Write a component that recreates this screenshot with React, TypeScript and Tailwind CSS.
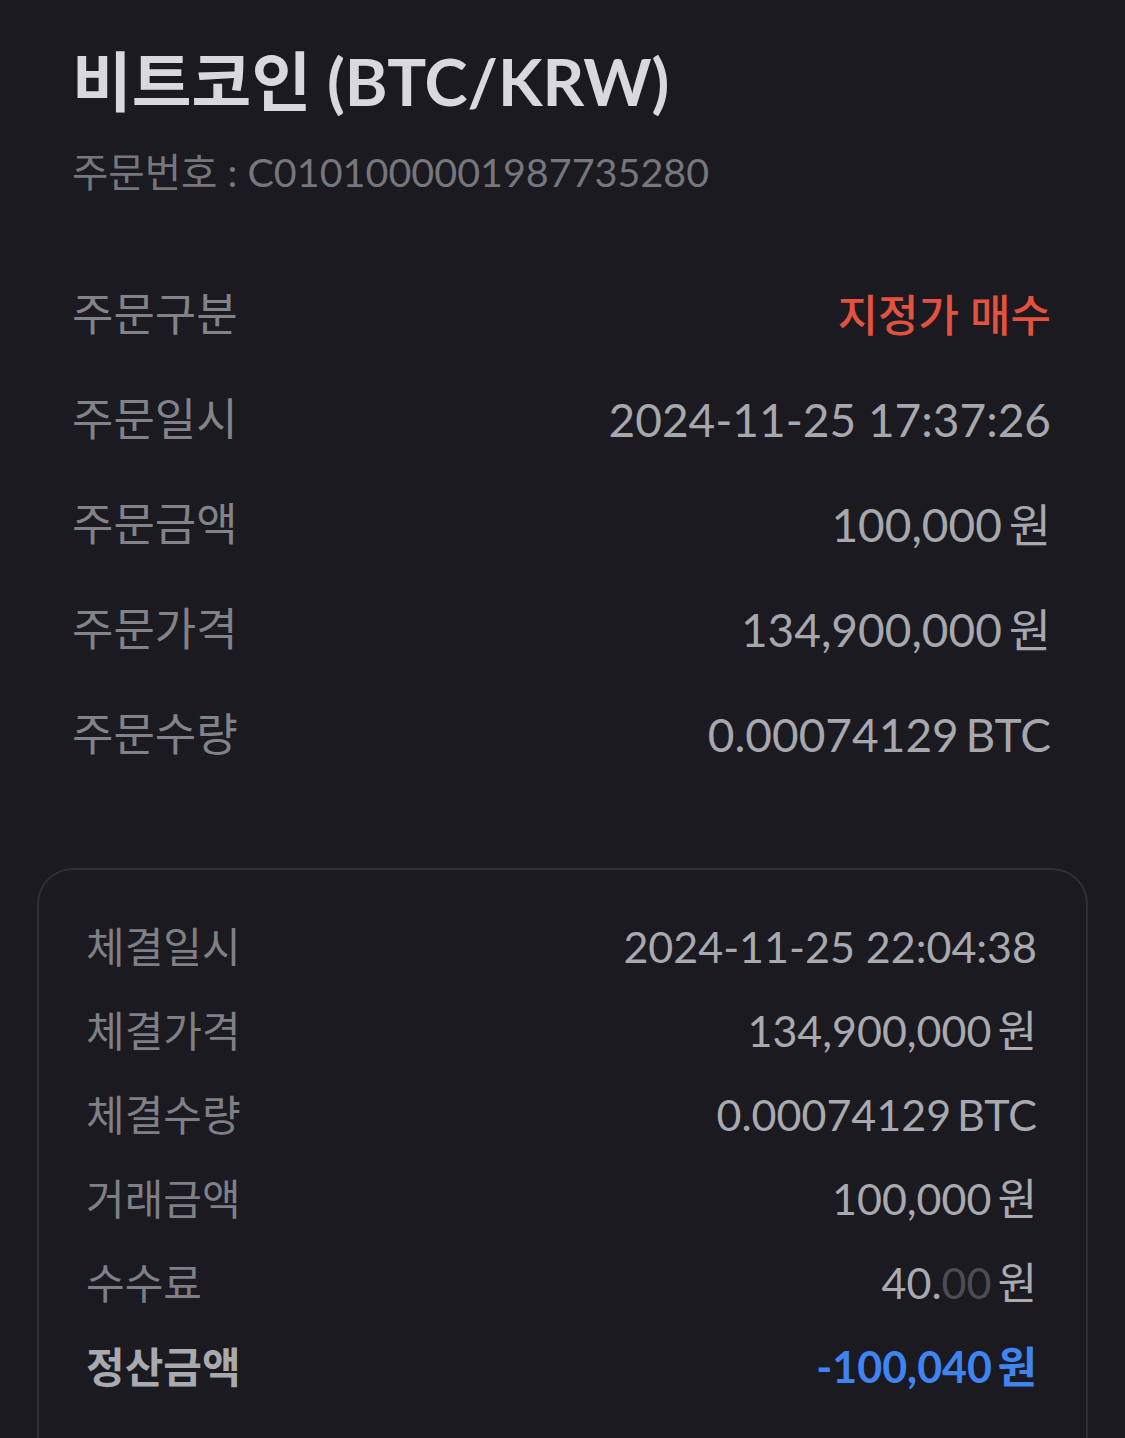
import React from "react";

const font = { fontFamily: "Lato, 'Noto Sans CJK KR', sans-serif" };

function MainRow({ label, children }: { label: string; children: React.ReactNode }) {
  return (
    <div className="flex h-[105px] items-center justify-between">
      <span className="text-[45px] text-[#828289]">{label}</span>
      <span className="text-[46px] text-[#a7a7ae] [word-spacing:-5px]">{children}</span>
    </div>
  );
}

function BoxRow({ label, children, bold }: { label: string; children: React.ReactNode; bold?: boolean }) {
  return (
    <div className="flex h-[84px] items-center justify-between">
      <span className={bold ? "text-[42px] font-bold text-[#a9a9b0]" : "text-[42px] text-[#7f7f86]"}>{label}</span>
      <span className="text-[43px] text-[#a9a9b0] [word-spacing:-5px]">{children}</span>
    </div>
  );
}

export default function App() {
  return (
    <div style={font} className="min-h-[1438px] w-[1125px] overflow-hidden bg-[#1a1a20]">
      <div className="pl-[72px] pr-[74px] pt-[36px]">
        <h1 className="text-[65px] font-bold leading-[90px] text-[#d8d8de]">비트코인 (BTC/KRW)</h1>
        <div className="mt-[16px] text-[39.5px] text-[#76767d]">주문번호 : C0101000001987735280</div>
      </div>
      <div className="mt-[61px] pl-[72px] pr-[74px]">
        <MainRow label="주문구분">
          <span className="text-[44px] font-medium text-[#e5513f] [word-spacing:0px]">지정가 매수</span>
        </MainRow>
        <MainRow label="주문일시">
          <span className="[word-spacing:0px]">2024-11-25 17:37:26</span>
        </MainRow>
        <MainRow label="주문금액">100,000 원</MainRow>
        <MainRow label="주문가격">134,900,000 원</MainRow>
        <MainRow label="주문수량">0.00074129 BTC</MainRow>
      </div>
      <div className="mx-[37px] mt-[81px] rounded-t-[36px] border-2 border-b-0 border-[#2e2e35] pl-[47px] pr-[49px] pt-[35px] pb-[40px]">
        <BoxRow label="체결일시">
          <span className="[word-spacing:0px]">2024-11-25 22:04:38</span>
        </BoxRow>
        <BoxRow label="체결가격">134,900,000 원</BoxRow>
        <BoxRow label="체결수량">0.00074129 BTC</BoxRow>
        <BoxRow label="거래금액">100,000 원</BoxRow>
        <BoxRow label="수수료">
          40.<span className="text-[#4c4c53]">00</span> 원
        </BoxRow>
        <BoxRow label="정산금액" bold>
          <span className="font-bold text-[#3f84f2]">-100,040 원</span>
        </BoxRow>
      </div>
    </div>
  );
}
